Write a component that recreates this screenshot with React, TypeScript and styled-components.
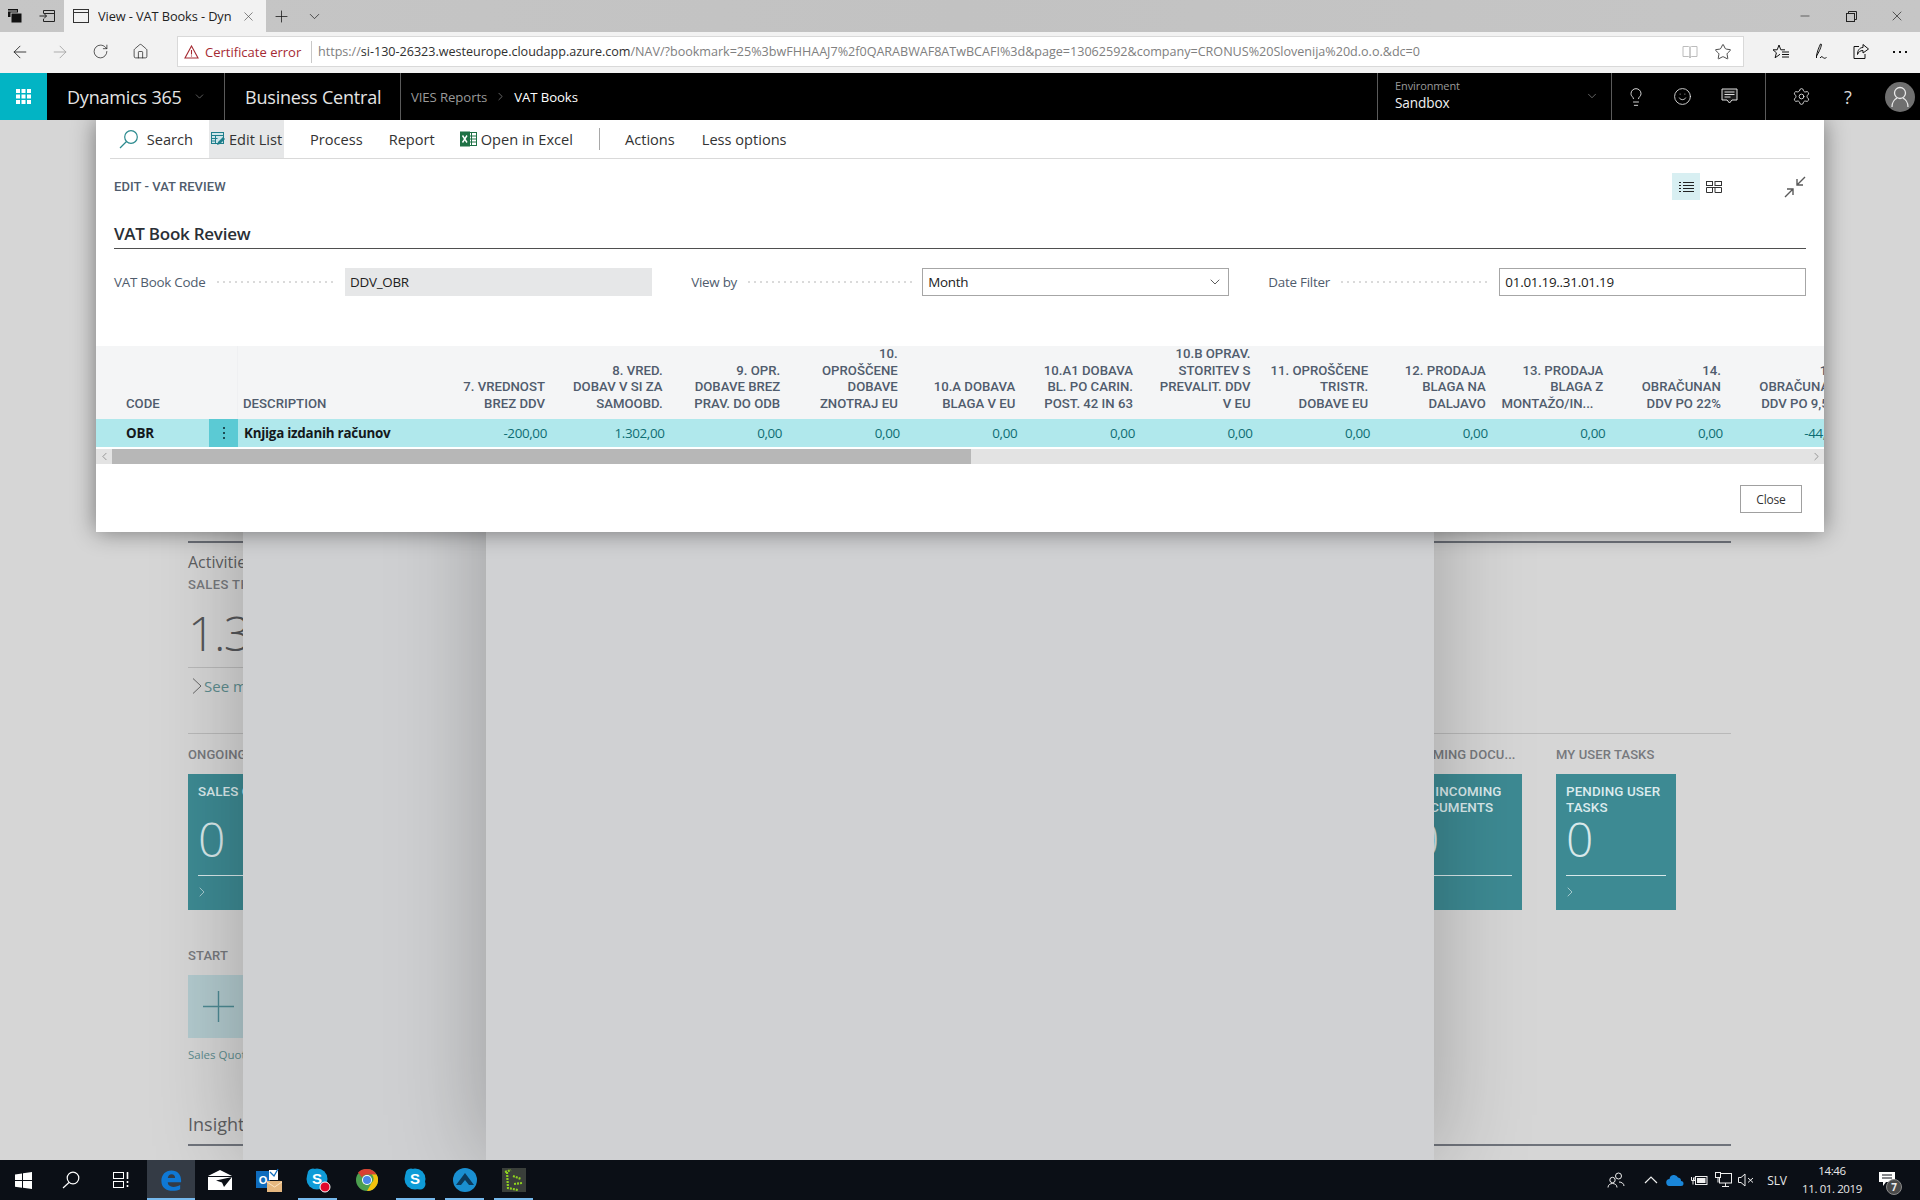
import React from "react";
import styled, { createGlobalStyle } from "styled-components";
import { ArrowLeft, ArrowRight, RotateCw, Home, Star, X, Plus, ChevronDown, ChevronRight, ChevronLeft, Minus, Lightbulb, Smile, Settings } from "lucide-react";

const UI = `"Open Sans", "Noto Sans", sans-serif`;
const DIN = `Roboto, "Liberation Sans", sans-serif`;

const Global = createGlobalStyle`
  html, body { margin: 0; padding: 0; width: 1920px; height: 1200px; overflow: hidden; background: #d5d5d5; }
  * { box-sizing: border-box; }
  #root { width: 1920px; height: 1200px; }
`;

const Screen = styled.div`
  width: 1920px; height: 1200px; display: flex; flex-direction: column;
  font-family: ${UI}; color: #222; overflow: hidden;
`;

/* ---------- browser chrome ---------- */
const TitleBar = styled.div`
  height: 32px; flex: none; display: flex; align-items: center;
  background: linear-gradient(to right, #c6c6c6, #c2c2c2 50%, #c6c6c6);
`;
const IconSlot = styled.div<{ $w: number; $color?: string; $ml?: number }>`
  width: ${p => p.$w}px; height: 100%; flex: none; display: flex; align-items: center; justify-content: center;
  margin-left: ${p => p.$ml || 0}px; color: ${p => p.$color || "#1a1a1a"};
`;
const Tab = styled.div`
  width: 202px; height: 32px; flex: none; background: #f2f2f2; display: flex; align-items: center;
  padding-left: 9px; font-size: 12.8px; letter-spacing: -0.1px; color: #222;
`;
const TabTitle = styled.span` margin-left: 9px; width: 143px; white-space: nowrap; overflow: hidden; `;
const Spring = styled.div` flex: 1; `;

const AddressBar = styled.div`
  height: 41px; flex: none; background: #f2f2f2; display: flex; align-items: center; padding-bottom: 2px;
`;
const UrlBox = styled.div`
  width: 1567px; height: 31px; margin-left: 17px; flex: none; background: #fff; border: 1px solid #d9d9d9;
  display: flex; align-items: center; font-size: 12.6px; white-space: nowrap; overflow: hidden;
`;
const CertError = styled.div`
  width: 134px; height: 22px; flex: none; display: flex; align-items: center; gap: 6px; padding-left: 6px;
  border-right: 1px solid #c8c8c8; color: #a52a32; font-size: 13px;
`;
const Url = styled.span` margin-left: 6px; width: 1360px; color: #808080; overflow: hidden; letter-spacing: -0.02px; `;
const UrlHost = styled.span` color: #303030; `;

/* ---------- app nav ---------- */
const NavBar = styled.div`
  height: 47px; flex: none; background: #000; display: flex; align-items: center; color: #fff; position: relative; z-index: 5;
`;
const Waffle = styled.div`
  width: 47px; height: 100%; flex: none; background: #02b4c4; display: flex; align-items: center; justify-content: center;
`;
const NavCell = styled.div<{ $w: number }>`
  width: ${p => p.$w}px; height: 100%; flex: none; display: flex; align-items: center; border-right: 1px solid #5a5a5a;
`;
const BrandText = styled.span<{ $pad: number }>`
  margin-left: ${p => p.$pad}px; font-size: 18px; font-weight: 400; color: #e4e4e4; white-space: nowrap; letter-spacing: -0.2px;
`;
const Crumb = styled.span<{ $current?: boolean }>`
  font-size: 13.2px; color: ${p => p.$current ? "#fff" : "#9a9a9a"}; white-space: nowrap; letter-spacing: -0.1px;
`;
const CrumbCell = styled.div`
  width: 977px; height: 100%; flex: none; display: flex; align-items: center; padding-left: 10px; gap: 7px; border-right: 1px solid #5a5a5a;
`;
const EnvCell = styled.div`
  width: 234px; height: 100%; flex: none; display: flex; align-items: center; justify-content: space-between;
  padding: 0 12px 2px 17px; border-right: 1px solid #5a5a5a;
`;
const EnvLabel = styled.div` font-size: 11px; color: #9a9a9a; line-height: 14px; letter-spacing: -0.1px; `;
const EnvValue = styled.div` font-size: 13.6px; color: #f2f2f2; line-height: 20px; letter-spacing: -0.1px; `;
const NavIcons = styled.div<{ $w: number; $pad: number }>`
  width: ${p => p.$w}px; height: 100%; flex: none; display: flex; align-items: center; padding-left: ${p => p.$pad}px;
  border-right: ${p => p.$w < 160 ? "1px solid #5a5a5a" : "none"}; color: #e6e6e6;
`;
const NavIcon = styled.div<{ $w: number }>`
  width: ${p => p.$w}px; flex: none; display: flex; justify-content: center;
`;
const QMark = styled.span` font-size: 18px; color: #d8d8d8; line-height: 20px; `;
const Avatar = styled.div`
  width: 30px; height: 30px; margin-left: 14px; border-radius: 50%; background: #6f6f6f; display: flex; align-items: center; justify-content: center; color: #e8e8e8;
`;

/* ---------- dimmed page behind ---------- */
const Stage = styled.div` flex: 1; position: relative; overflow: hidden; background: #d6d6d6; `;
const BaseContent = styled.div` padding: 421px 189px 0 188px; display: flex; flex-direction: column; `;
const Rule = styled.div<{ $top?: number }>` height: 2px; background: #6f737b; margin-top: ${p => p.$top || 0}px; flex: none; `;
const ThinRule = styled.div<{ $top: number; $w?: number }>`
  height: 1px; background: #b9b9b9; margin-top: ${p => p.$top}px; width: ${p => p.$w ? p.$w + "px" : "auto"}; flex: none;
`;
const SectionName = styled.div<{ $top: number; $size: number; $lh: number }>`
  margin-top: ${p => p.$top}px; font-size: ${p => p.$size}px; line-height: ${p => p.$lh}px; color: #5e5f62;
`;
const CueLabel = styled.div`
  margin-top: 5px; font-family: ${DIN}; font-size: 13px; line-height: 16px; font-weight: 500; color: #77797d; letter-spacing: .4px;
`;
const BigNumber = styled.div`
  margin-top: 12px; font-size: 48px; line-height: 56px; font-weight: 300; color: #55575a; letter-spacing: -1.5px;
`;
const SeeMore = styled.div`
  margin-top: 8px; padding-left: 4px; font-size: 15px; line-height: 20px; color: #5d8c8e; display: flex; align-items: center; gap: 2px;
`;
const GroupRow = styled.div` display: flex; gap: 34px; margin-top: 13px; `;
const Group = styled.div<{ $push?: boolean }>`
  width: 120px; flex: none; margin-left: ${p => p.$push ? "auto" : 0}; margin-right: ${p => p.$push === false ? "55px" : 0};
`;
const GroupHead = styled.div`
  font-family: ${DIN}; font-size: 13px; line-height: 16px; font-weight: 500; color: #77797d; white-space: nowrap; letter-spacing: .1px;
`;
const Tile = styled.div`
  height: 136px; margin-top: 11px; padding: 10px 10px 0; background: #3d8a93; color: #d8e8ea; display: flex; flex-direction: column;
`;
const TileTitle = styled.div`
  font-family: ${DIN}; font-size: 13.4px; font-weight: 500; line-height: 16px; min-height: 32px; color: #dcebed; letter-spacing: .1px;
`;
const TileCount = styled.div` font-size: 48px; font-weight: 300; line-height: 44px; margin-top: 1px; `;
const TileFoot = styled.div`
  margin-top: auto; height: 35px; border-top: 1px solid #d8e8ea; display: flex; align-items: center; padding-bottom: 2px;
  svg { margin-left: -4px; }
`;
const StartHead = styled(GroupHead)` margin-top: 38px; `;
const StartTile = styled.div`
  width: 120px; height: 63px; margin-top: 11px; background: #b2cace; color: #4d8a93; display: flex; align-items: center; padding-left: 15px;
`;
const StartLabel = styled.div` margin-top: 9px; font-size: 11.5px; line-height: 16px; color: #5d8c8e; `;

const Pane = styled.div<{ $left: number; $w: number; $bg: string }>`
  position: absolute; top: 0; bottom: 0; left: ${p => p.$left}px; width: ${p => p.$w}px;
  background: ${p => p.$bg}; box-shadow: 0 0 90px rgba(0,0,0,.26);
`;

/* ---------- dialog ---------- */
const Dialog = styled.div`
  position: absolute; left: 96px; top: 0; width: 1728px; height: 412px; background: #fff;
  box-shadow: 0 0 22px rgba(0,0,0,.45); display: flex; flex-direction: column; overflow: hidden;
`;
const Toolbar = styled.div`
  height: 39px; flex: none; margin: 0 14px 0 14px; border-bottom: 1px solid #d9d9d9; display: flex; align-items: stretch;
  font-size: 14.6px; color: #333; letter-spacing: 0;
`;
const ToolButton = styled.div<{ $active?: boolean; $ml?: number; $w?: number }>`
  display: flex; align-items: center; gap: 4px; white-space: nowrap; flex: none;
  margin-left: ${p => p.$ml || 0}px; width: ${p => p.$w ? p.$w + "px" : "auto"};
  background: ${p => p.$active ? "#e6e7e8" : "transparent"}; padding-left: ${p => p.$active ? "2px" : 0};
`;
const ToolDivider = styled.div` width: 1px; height: 22px; align-self: center; background: #a8a8a8; margin-left: 26px; margin-right: 25px; flex: none; `;
const CaptionRow = styled.div`
  height: 55px; flex: none; padding: 0 18px; display: flex; align-items: center;
`;
const Caption = styled.div`
  font-family: ${DIN}; font-size: 13px; font-weight: 500; color: #505c6d; white-space: nowrap; letter-spacing: .05px;
`;
const ViewToggle = styled.div<{ $on?: boolean }>`
  width: 28px; height: 27px; flex: none; display: flex; align-items: center; justify-content: center; background: ${p => p.$on ? "#d8eff2" : "transparent"};
`;
const CollapseWrap = styled.div` margin-left: 56px; display: flex; color: #5a5a5a; `;
const SectionTitle = styled.div`
  margin: 0 18px; height: 35px; flex: none; border-bottom: 1px solid #4f4f4f; font-size: 17px; font-weight: 600; color: #2a2f36; line-height: 39px; letter-spacing: -0.25px;
`;
const Fields = styled.div`
  margin: 19px 18px 0; display: grid; grid-template-columns: repeat(3, 1fr); column-gap: 39.5px; flex: none;
`;
const Field = styled.div` display: flex; align-items: center; height: 28px; `;
const FieldLabel = styled.div`
  width: 231px; flex: none; display: flex; align-items: center; gap: 9px; font-size: 13.4px; color: #505c6d; white-space: nowrap; letter-spacing: -0.25px; padding-right: 8px;
`;
const Dots = styled.span`
  flex: 1; height: 2px; background-image: radial-gradient(circle, #dadada 1px, transparent 1px); background-size: 6px 2px;
`;
const Input = styled.div<{ $ro?: boolean }>`
  flex: 1; height: 28px; display: flex; align-items: center; justify-content: space-between; padding: 0 5px;
  font-size: 13.4px; color: #212121; letter-spacing: -0.25px;
  background: ${p => p.$ro ? "#e6e7e8" : "#fff"}; border: ${p => p.$ro ? "none" : "1px solid #a6a6a6"};
`;
const TableClip = styled.div` margin-top: 50px; flex: none; overflow: hidden; `;
const GRID = "113px 29px 191.4px repeat(12, 117.6px)";
const HeadRow = styled.div`
  display: grid; grid-template-columns: ${GRID}; width: 1744px; height: 73px; background: #f4f5f6;
`;
const HeadCell = styled.div<{ $left?: number; $sep?: boolean }>`
  display: flex; align-items: flex-end; justify-content: ${p => p.$left !== undefined ? "flex-start" : "flex-end"};
  padding: 0 ${p => p.$left !== undefined ? 0 : 2}px 7px ${p => p.$left || 0}px;
  text-align: ${p => p.$left !== undefined ? "left" : "right"};
  font-family: ${DIN}; font-size: 13.2px; line-height: 16.6px; font-weight: 500; color: #505c6d; white-space: pre-line;
  border-right: ${p => p.$sep ? "1px solid #eff0f2" : "none"};
`;
const DataRow = styled.div`
  display: grid; grid-template-columns: ${GRID}; width: 1744px; height: 28px; background: #b0e8ec; align-items: center;
`;
const CodeCell = styled.div` padding-left: 30px; font-size: 13.4px; font-weight: 700; color: #15191c; letter-spacing: -0.2px; `;
const DotsCell = styled.div`
  height: 28px; background: #5bcad4; display: flex; flex-direction: column; align-items: center; justify-content: center; gap: 3px;
`;
const Dot = styled.i` width: 2px; height: 2px; background: #1d4e55; display: block; `;
const DescCell = styled.div` padding-left: 6px; font-size: 13.4px; font-weight: 700; color: #15191c; letter-spacing: -0.25px; white-space: nowrap; `;
const NumCell = styled.div` text-align: right; font-size: 13.4px; color: #0e6d73; letter-spacing: -0.35px; white-space: nowrap; `;
const ScrollBar = styled.div`
  margin-top: 2px; height: 15px; flex: none; background: #e3e3e3; display: flex; align-items: center; color: #555;
`;
const ScrollArrow = styled.div` width: 16px; flex: none; display: flex; justify-content: center; `;
const ScrollThumb = styled.div` width: 859px; height: 15px; background: #b7b7b7; flex: none; `;
const Footer = styled.div` flex: 1; display: flex; justify-content: flex-end; padding: 21px 22px 0 0; `;
const CloseButton = styled.div`
  width: 62px; height: 28px; border: 1px solid #a0a0a0; background: #fff; display: flex; align-items: center; justify-content: center;
  font-size: 12px; color: #333; letter-spacing: -0.2px;
`;

/* ---------- taskbar ---------- */
const TaskBar = styled.div`
  height: 40px; flex: none; background: #0b0f16; display: flex; align-items: center; position: relative; z-index: 5; color: #fff;
`;
const TaskItem = styled.div<{ $w?: number; $active?: boolean; $open?: boolean }>`
  width: ${p => p.$w || 49}px; height: 40px; flex: none; display: flex; align-items: center; justify-content: center; position: relative;
  background: ${p => p.$active ? "#343b45" : "transparent"};
  &::after {
    content: ""; display: ${p => p.$open ? "block" : "none"}; position: absolute; bottom: 0;
    left: ${p => p.$active ? 0 : 5}px; right: ${p => p.$active ? 0 : 5}px; height: 2px; background: #76b9ed;
  }
`;
const Tray = styled.div<{ $w: number; $mr?: number }>`
  width: ${p => p.$w}px; height: 40px; flex: none; display: flex; align-items: center; justify-content: center; color: #eee;
  margin-right: ${p => p.$mr || 0}px;
`;
const TrayText = styled.span` font-size: 12px; color: #e8e8e8; letter-spacing: -0.2px; `;
const Clock = styled.div`
  width: 70px; flex: none; margin-right: 8px; text-align: center; font-size: 11.5px; line-height: 18px; color: #e8e8e8; letter-spacing: -0.4px; white-space: nowrap;
`;
const Notify = styled.div`
  width: 45px; height: 40px; position: relative; flex: none; display: flex; align-items: center; padding: 0 0 2px 4px;
`;
const Badge = styled.div`
  position: absolute; left: 11px; top: 19px; width: 16px; height: 16px; border-radius: 50%; background: #4a4a4a; border: 1px solid #8a8a8a;
  font-size: 10px; font-weight: 700; line-height: 14px; text-align: center; color: #eee;
`;

/* ---------- drawn icons ---------- */
const ManageTabs = () => (
  <svg width="16" height="16" viewBox="0 0 16 16"><rect x="1" y="1" width="10" height="8" fill="#111" /><rect x="4" y="5" width="11" height="10" fill="#111" stroke="#c4c4c4" strokeWidth="1" /><rect x="1" y="2.5" width="9" height="1" fill="#c4c4c4" /></svg>
);
const AsideTabs = () => (
  <svg width="16" height="14" viewBox="0 0 16 14" fill="none" stroke="#222"><path d="M4.5 4V1.5h11v11h-11V10" /><path d="M4.5 4.5h11" /><path d="M.5 7h7M5 4.5 7.5 7 5 9.5" /></svg>
);
const PageIcon = () => (
  <svg width="16" height="16" viewBox="0 0 16 16" fill="none" stroke="#333"><rect x=".5" y="1.5" width="15" height="13" /><path d="M.5 4.5h15" /></svg>
);
const Restore = () => (
  <svg width="11" height="11" viewBox="0 0 11 11" fill="none" stroke="#222"><rect x=".5" y="2.5" width="8" height="8" /><path d="M2.5 2.5v-2h8v8h-2" /></svg>
);
const Warn = () => (
  <svg width="15" height="14" viewBox="0 0 15 14" fill="none" stroke="#a52a32" strokeWidth="1.1"><path d="M7.5 1 14 13H1z" /><path d="M7.5 5v4.5M7.5 10.6v1" /></svg>
);
const Reader = () => (
  <svg width="16" height="16" viewBox="0 0 16 16" fill="none" stroke="#bcbcbc"><path d="M1 2.5h5.5c1 0 1.5.5 1.5 1.5v10c0-1-.5-1.5-1.5-1.5H1zM15 2.5H9.500C8.500 2.500 8 3 8 4v10c0-1 .5-1.500 1.500-1.500H15z" /></svg>
);
const HubIcon = () => (
  <svg width="18" height="18" viewBox="0 0 18 18" fill="none" stroke="#111"><path d="M7 2 8.800 6.800H13M7 2 5.200 6.800H1l3.400 3-1.300 5L7 12l1-.8" /><path d="M10 9h7M10 11.500h7M10 14h7" /></svg>
);
const PenIcon = () => (
  <svg width="18" height="18" viewBox="0 0 18 18" fill="none" stroke="#111"><path d="M8.500 1C7 4 5 9 4.500 13c2-3 4.500-8 5-11.500C9.400 1 9 .9 8.500 1zM4.500 13v2" /><path d="M8 15c1.500-2 2.500-1.500 3-.5s2 1 3.500 0" /></svg>
);
const ShareIcon = () => (
  <svg width="18" height="18" viewBox="0 0 18 18" fill="none" stroke="#111"><path d="M7 3.500H2v12h11V11" /><path d="M11 1.500 16.500 6 11 10V7.500C8 7.500 6.500 9 5.500 11.500 5.500 7.500 7.500 4.500 11 4.500z" /></svg>
);
const Ellipsis = () => (
  <svg width="14" height="4" viewBox="0 0 14 4" fill="#111"><rect x="0" y="1" width="2" height="2" /><rect x="6" y="1" width="2" height="2" /><rect x="12" y="1" width="2" height="2" /></svg>
);
const WaffleIcon = () => (
  <svg width="15" height="15" viewBox="0 0 15 15" fill="#fff">
    {[0, 5.5, 11].flatMap(x => [0, 5.5, 11].map(y => <rect key={`${x}-${y}`} x={x} y={y} width="4" height="4" />))}
  </svg>
);
const CommentIcon = () => (
  <svg width="17" height="17" viewBox="0 0 17 17"><path d="M1 1h15v11h-5l-2.500 3L6 12H1z" fill="#1a1a1a" stroke="#e0e0e0" /><path d="M3.500 4h10M3.500 6.500h10M3.500 9h6" stroke="#e0e0e0" /></svg>
);
const UserIcon = () => (
  <svg width="20" height="22" viewBox="0 0 20 22" fill="none" stroke="currentColor" strokeWidth="1.300"><circle cx="10" cy="7" r="5.500" /><path d="M2 21c0-5 3-8 5-8.800M18 21c0-5-3-8-5-8.800" /></svg>
);
const ExcelIcon = () => (
  <svg width="17" height="16" viewBox="0 0 17 16"><rect x="7" y="1.500" width="9.500" height="13" fill="#fff" stroke="#1e7145" /><path d="M7 5h9.500M7 8h9.500M7 11h9.500M11.500 1.500v13" stroke="#1e7145" /><rect x="0" y="0.500" width="10" height="15" fill="#1e7145" /><path d="M2.500 4.500 7 11.500M7 4.500 2.500 11.500" stroke="#fff" strokeWidth="1.400" /></svg>
);
const EditListIcon = () => (
  <svg width="14" height="14" viewBox="0 0 14 14"><rect x="0.500" y="0.500" width="12" height="11" fill="#cfe6ea" stroke="#1f7f8c" /><path d="M0.500 3.500h12M0.500 6.500h6M0.500 9h4M4.500 3.500v8" stroke="#1f7f8c" /><path d="M6 13l1-3 5-5 2 2-5 5z" fill="#1f7f8c" /></svg>
);
const SearchGlass = () => (
  <svg width="20" height="20" viewBox="0 0 20 20" fill="none" stroke="#2b8a8e" strokeWidth="1.200"><circle cx="12" cy="8" r="6.300" /><path d="M7.500 12.500 1 19" /></svg>
);
const ListIcon = () => (
  <svg width="15" height="12" viewBox="0 0 15 12" stroke="#222"><path d="M0 1.500h2M4 1.500h11M0 4.500h2M4 4.500h11M0 7.500h2M4 7.500h11M0 10.500h2M4 10.500h11" /></svg>
);
const CardsIcon = () => (
  <svg width="16" height="12" viewBox="0 0 16 12" fill="none" stroke="#333"><rect x=".5" y=".5" width="6" height="4" /><rect x="9" y=".5" width="6.500" height="4" /><path d="M.5 6.500h15M.5 6.500v5h6v-5M9 6.500v5h6.500v-5" /></svg>
);
const CollapseIcon = () => (
  <svg width="22" height="22" viewBox="0 0 22 22" fill="none" stroke="currentColor" strokeWidth="1.400"><path d="M21 1 13 9M13 3v6h6M1 21l8-8M3 13h6v6" /></svg>
);
const SeeChevron = () => (
  <svg width="10" height="16" viewBox="0 0 10 16" fill="none" stroke="#666"><path d="m1 .5 8 7.500-8 7.500" /></svg>
);
const PlusGlyph = () => (
  <svg width="31" height="31" viewBox="0 0 31 31" stroke="currentColor" strokeWidth="1.400"><path d="M0 15.500h31M15.500 0v31" /></svg>
);
const WinLogo = () => (
  <svg width="17" height="17" viewBox="0 0 17 17" fill="#fff"><path d="M0 2.400 7 1.400v6.700H0zM8 1.300 17 0v8.100H8zM0 9h7v6.700l-7-1zM8 9h9v8l-9-1.300z" /></svg>
);
const Magnifier = () => (
  <svg width="18" height="18" viewBox="0 0 18 18" fill="none" stroke="#fff" strokeWidth="1.200"><circle cx="11" cy="7" r="5.800" /><path d="M7 11.500 1 17" /></svg>
);
const TaskView = () => (
  <svg width="17" height="16" viewBox="0 0 17 16" fill="none" stroke="#fff"><rect x=".5" y=".5" width="10" height="6" /><rect x=".5" y="9.500" width="10" height="6" /><path d="M14.500 0v7M14.500 9v2M14.500 13v2" strokeWidth="1.600" /></svg>
);
const EdgeLogo = () => (
  <svg width="22" height="22" viewBox="0 0 24 24"><path fillRule="evenodd" fill="#0f78d4" d="M1.500 13C1.500 6 6 1.500 12.500 1.500 19 1.500 23 6 23 12v2.500H8.500c0 3 2.500 5 6 5 3 0 5.500-.7 7.500-2V22c-2 1.200-5 1.800-8 1.800C6.500 23.800 1.500 20 1.500 13zM8.500 9.800h8c0-2.400-1.500-4-3.800-4-2.400 0-3.900 1.600-4.200 4z" /></svg>
);
const MailLogo = () => (
  <svg width="24" height="20" viewBox="0 0 24 20"><path d="M0 6 12 0l12 6z" fill="#fff" /><rect x="0" y="7" width="24" height="13" fill="#fff" /><path d="M24 7 8 10.500l6 2 2 4.500z" fill="#0b0f16" /></svg>
);
const OutlookLogo = () => (
  <svg width="26" height="26" viewBox="0 0 26 26">
    <rect x="0" y="4" width="14" height="17" fill="#0f6cbd" />
    <text x="7" y="17" textAnchor="middle" fontSize="11" fontWeight="700" fill="#fff" fontFamily="Liberation Sans">O</text>
    <rect x="13" y="3" width="9" height="10" fill="#fff" /><path d="m14 5 4 4 4-7" fill="none" stroke="#0f6cbd" strokeWidth="1.300" />
    <rect x="11" y="14" width="15" height="11" fill="#e5b77f" /><path d="m11 15 7.500 5 7.500-5" fill="none" stroke="#fbe5c4" />
  </svg>
);
const SkypeLogo = ({ dot }: { dot?: boolean }) => (
  <svg width="26" height="26" viewBox="0 0 26 26">
    <circle cx="12" cy="12" r="10.500" fill="#0f9bd7" /><circle cx="8" cy="7" r="5.500" fill="#0f9bd7" /><circle cx="17" cy="17" r="5.500" fill="#0f9bd7" />
    <text x="12" y="17" textAnchor="middle" fontSize="15" fontWeight="700" fill="#fff" fontFamily="Liberation Sans">S</text>
    {dot && <circle cx="20" cy="20" r="5" fill="#e3092c" stroke="#fff" strokeWidth="1" />}
  </svg>
);
const ChromeLogo = () => (
  <svg width="22" height="22" viewBox="0 0 22 22">
    <circle cx="11" cy="11" r="11" fill="#4c9f4f" />
    <path d="M11 0a11 11 0 0 1 9.530 5.500H11a5.500 5.500 0 0 0-5 3L2 3.500A11 11 0 0 1 11 0z" fill="#d93f33" />
    <path d="M20.530 5.500A11 11 0 0 1 11 22l4.700-8.200a5.500 5.500 0 0 0 0-8.300z" fill="#f4c20d" />
    <circle cx="11" cy="11" r="5" fill="#fff" /><circle cx="11" cy="11" r="4" fill="#4a87e8" />
  </svg>
);
const ArrowApp = () => (
  <svg width="24" height="24" viewBox="0 0 24 24"><circle cx="12" cy="12" r="12" fill="#1a8fd1" /><path d="M12 5 21 17h-5l-4-5-4 5H3z" fill="#0c3a5c" /></svg>
);
const GreenApp = () => (
  <svg width="24" height="24" viewBox="0 0 24 24"><rect width="24" height="24" fill="#3a3f3a" /><path d="M3 4 9 2M5 4l1 16 10 2M11 8l8 3M20 15l-8 1" fill="none" stroke="#8ed11f" strokeWidth="2.200" strokeDasharray="2 1" /></svg>
);
const People = () => (
  <svg width="18" height="16" viewBox="0 0 18 16" fill="none" stroke="#eee"><circle cx="11.500" cy="4" r="3" /><circle cx="5.500" cy="8" r="2.700" /><path d="M1 15.500c0-2.500 2-4 4.500-4s4.500 1.500 4.500 4M12 10c2.500 0 5 1.500 5 4" /></svg>
);
const Caret = () => (
  <svg width="14" height="8" viewBox="0 0 14 8" fill="none" stroke="#eee" strokeWidth="1.200"><path d="m1 7 6-6 6 6" /></svg>
);
const Cloud = () => (
  <svg width="18" height="12" viewBox="0 0 18 12" fill="#1a86d9"><path d="M4 12a3.500 3.500 0 0 1-.5-7 4.500 4.500 0 0 1 8.500-1.500A3.500 3.500 0 0 1 15 7a2.500 2.500 0 0 1 0 5z" /></svg>
);
const Battery = () => (
  <svg width="17" height="12" viewBox="0 0 17 12" fill="none" stroke="#eee"><rect x="4.500" y="2.500" width="11.500" height="8" /><rect x="6" y="4" width="8.500" height="5" fill="#eee" stroke="none" /><path d="M2.500 3.500v3M.5 3v3.500h3.500V3M2 6.500v4" /></svg>
);
const Network = () => (
  <svg width="17" height="16" viewBox="0 0 17 16" fill="none" stroke="#eee"><rect x="4.500" y="1.500" width="12" height="9.500" /><rect x=".5" y=".5" width="5" height="5" fill="#0b0f16" /><path d="M10.500 11v3M7 14.500h7M3 5.500v5" /></svg>
);
const Speaker = () => (
  <svg width="16" height="14" viewBox="0 0 16 14" fill="none" stroke="#eee"><path d="M.5 4.500H3L7 1v12L3 9.500H.5z" /><path d="m10 5 5 4.500M15 5l-5 4.500" /></svg>
);
const Bubble = () => (
  <svg width="16" height="14" viewBox="0 0 16 14"><path d="M0 0h16v10H7l-3 4v-4H0z" fill="#fff" /><path d="M3 3h10M3 6h10" stroke="#0b0f16" /></svg>
);

const COLS: { h: string; v: string }[] = [
  { h: "7. VREDNOST\nBREZ DDV", v: "-200,00" },
  { h: "8. VRED.\nDOBAV V SI ZA\nSAMOOBD.", v: "1.302,00" },
  { h: "9. OPR.\nDOBAVE BREZ\nPRAV. DO ODB", v: "0,00" },
  { h: "10.\nOPROŠČENE\nDOBAVE\nZNOTRAJ EU", v: "0,00" },
  { h: "10.A DOBAVA\nBLAGA V EU", v: "0,00" },
  { h: "10.A1 DOBAVA\nBL. PO CARIN.\nPOST. 42 IN 63", v: "0,00" },
  { h: "10.B OPRAV.\nSTORITEV S\nPREVALIT. DDV\nV EU", v: "0,00" },
  { h: "11. OPROŠČENE\nTRISTR.\nDOBAVE EU", v: "0,00" },
  { h: "12. PRODAJA\nBLAGA NA\nDALJAVO", v: "0,00" },
  { h: "13. PRODAJA\nBLAGA Z\nMONTAŽO/IN...\u00a0\u00a0\u00a0", v: "0,00" },
  { h: "14.\nOBRAČUNAN\nDDV PO 22%", v: "0,00" },
  { h: "15.\nOBRAČUNAN\nDDV PO 9,5%", v: "-44,00" },
];

export default function App() {
  return (
    <Screen>
      <Global />
      <TitleBar>
        <IconSlot $w={30}><ManageTabs /></IconSlot>
        <IconSlot $w={34}><AsideTabs /></IconSlot>
        <Tab>
          <PageIcon />
          <TabTitle>View - VAT Books - Dyn</TabTitle>
          <X size={15} strokeWidth={1} color="#444" />
        </Tab>
        <IconSlot $w={31}><Plus size={19} strokeWidth={1} /></IconSlot>
        <IconSlot $w={35}><ChevronDown size={17} strokeWidth={1} /></IconSlot>
        <Spring />
        <IconSlot $w={46}><Minus size={14} strokeWidth={1} /></IconSlot>
        <IconSlot $w={46}><Restore /></IconSlot>
        <IconSlot $w={46}><X size={16} strokeWidth={1} /></IconSlot>
      </TitleBar>

      <AddressBar>
        <IconSlot $w={40}><ArrowLeft size={20} strokeWidth={1} /></IconSlot>
        <IconSlot $w={40} $color="#a0a0a0"><ArrowRight size={20} strokeWidth={1} /></IconSlot>
        <IconSlot $w={40}><RotateCw size={17} strokeWidth={1} /></IconSlot>
        <IconSlot $w={40}><Home size={17} strokeWidth={1} /></IconSlot>
        <UrlBox>
          <CertError><Warn /> Certificate error</CertError>
          <Url>https://<UrlHost>si-130-26323.westeurope.cloudapp.azure.com</UrlHost>/NAV/?bookmark=25%3bwFHHAAJ7%2f0QARABWAF8ATwBCAFI%3d&amp;page=13062592&amp;company=CRONUS%20Slovenija%20d.o.o.&amp;dc=0</Url>
          <IconSlot $w={24}><Reader /></IconSlot>
          <IconSlot $w={41}><Star size={18} strokeWidth={1} color="#111" /></IconSlot>
        </UrlBox>
        <IconSlot $w={40} $ml={17}><HubIcon /></IconSlot>
        <IconSlot $w={40}><PenIcon /></IconSlot>
        <IconSlot $w={39}><ShareIcon /></IconSlot>
        <IconSlot $w={40}><Ellipsis /></IconSlot>
      </AddressBar>

      <NavBar>
        <Waffle><WaffleIcon /></Waffle>
        <NavCell $w={178}>
          <BrandText $pad={20}>Dynamics 365</BrandText>
          <IconSlot $w={36} $color="#aaa"><ChevronDown size={13} strokeWidth={1} /></IconSlot>
        </NavCell>
        <NavCell $w={176}><BrandText $pad={20}>Business Central</BrandText></NavCell>
        <CrumbCell>
          <Crumb>VIES Reports</Crumb>
          <ChevronRight size={13} strokeWidth={1} color="#bbb" />
          <Crumb $current>VAT Books</Crumb>
        </CrumbCell>
        <EnvCell>
          <div>
            <EnvLabel>Environment</EnvLabel>
            <EnvValue>Sandbox</EnvValue>
          </div>
          <ChevronDown size={14} strokeWidth={1} color="#aaa" />
        </EnvCell>
        <NavIcons $w={154} $pad={0}>
          <NavIcon $w={47}><Lightbulb size={20} strokeWidth={1.1} /></NavIcon>
          <NavIcon $w={47}><Smile size={19} strokeWidth={1.1} /></NavIcon>
          <NavIcon $w={47}><CommentIcon /></NavIcon>
        </NavIcons>
        <NavIcons $w={160} $pad={12}>
          <NavIcon $w={47}><Settings size={19} strokeWidth={1.1} /></NavIcon>
          <NavIcon $w={46}><QMark>?</QMark></NavIcon>
          <Avatar><UserIcon /></Avatar>
        </NavIcons>
      </NavBar>

      <Stage>
        <BaseContent>
          <Rule />
          <SectionName $top={9} $size={16} $lh={20}>Activities</SectionName>
          <CueLabel>SALES THIS MONTH</CueLabel>
          <BigNumber>1.302</BigNumber>
          <ThinRule $top={6} $w={300} />
          <SeeMore><SeeChevron />See more</SeeMore>
          <ThinRule $top={37} />
          <GroupRow>
            <Group>
              <GroupHead>ONGOING SALES</GroupHead>
              <Tile>
                <TileTitle>SALES QUOTES</TileTitle>
                <TileCount>0</TileCount>
                <TileFoot><ChevronRight size={16} strokeWidth={1} /></TileFoot>
              </Tile>
            </Group>
            <Group $push>
              <GroupHead>INCOMING DOCU...</GroupHead>
              <Tile>
                <TileTitle>MY INCOMING DOCUMENTS</TileTitle>
                <TileCount>0</TileCount>
                <TileFoot><ChevronRight size={16} strokeWidth={1} /></TileFoot>
              </Tile>
            </Group>
            <Group $push={false}>
              <GroupHead>MY USER TASKS</GroupHead>
              <Tile>
                <TileTitle>PENDING USER TASKS</TileTitle>
                <TileCount>0</TileCount>
                <TileFoot><ChevronRight size={16} strokeWidth={1} /></TileFoot>
              </Tile>
            </Group>
          </GroupRow>
          <StartHead>START</StartHead>
          <StartTile><PlusGlyph /></StartTile>
          <StartLabel>Sales Quote</StartLabel>
          <SectionName $top={49} $size={18} $lh={24}>Insights</SectionName>
          <Rule $top={8} />
        </BaseContent>

        <Pane $left={243} $w={243} $bg="#cfd0d2" />
        <Pane $left={486} $w={948} $bg="#d0d1d3" />

        <Dialog>
          <Toolbar>
            <ToolButton $ml={9}><SearchGlass /><span>&nbsp;Search</span></ToolButton>
            <ToolButton $active $ml={16} $w={75}><EditListIcon />Edit List</ToolButton>
            <ToolButton $ml={26}>Process</ToolButton>
            <ToolButton $ml={26}>Report</ToolButton>
            <ToolButton $ml={25}><ExcelIcon />Open in Excel</ToolButton>
            <ToolDivider />
            <ToolButton>Actions</ToolButton>
            <ToolButton $ml={27}>Less options</ToolButton>
          </Toolbar>
          <CaptionRow>
            <Caption>EDIT - VAT REVIEW</Caption>
            <Spring />
            <ViewToggle $on><ListIcon /></ViewToggle>
            <ViewToggle><CardsIcon /></ViewToggle>
            <CollapseWrap><CollapseIcon /></CollapseWrap>
          </CaptionRow>
          <SectionTitle>VAT Book Review</SectionTitle>
          <Fields>
            <Field>
              <FieldLabel>VAT Book Code<Dots /></FieldLabel>
              <Input $ro>DDV_OBR</Input>
            </Field>
            <Field>
              <FieldLabel>View by<Dots /></FieldLabel>
              <Input>Month<ChevronDown size={16} strokeWidth={1.2} color="#333" /></Input>
            </Field>
            <Field>
              <FieldLabel>Date Filter<Dots /></FieldLabel>
              <Input>01.01.19..31.01.19</Input>
            </Field>
          </Fields>
          <TableClip>
            <HeadRow>
              <HeadCell $left={30}>CODE</HeadCell>
              <HeadCell $left={0} $sep />
              <HeadCell $left={5}>DESCRIPTION</HeadCell>
              {COLS.map(c => <HeadCell key={c.h}>{c.h}</HeadCell>)}
            </HeadRow>
            <DataRow>
              <CodeCell>OBR</CodeCell>
              <DotsCell><Dot /><Dot /><Dot /></DotsCell>
              <DescCell>Knjiga izdanih računov</DescCell>
              {COLS.map(c => <NumCell key={c.h}>{c.v}</NumCell>)}
            </DataRow>
          </TableClip>
          <ScrollBar>
            <ScrollArrow><ChevronLeft size={13} strokeWidth={1} /></ScrollArrow>
            <ScrollThumb />
            <Spring />
            <ScrollArrow><ChevronRight size={13} strokeWidth={1} /></ScrollArrow>
          </ScrollBar>
          <Footer><CloseButton>Close</CloseButton></Footer>
        </Dialog>
      </Stage>

      <TaskBar>
        <TaskItem $w={47}><WinLogo /></TaskItem>
        <TaskItem $w={48}><Magnifier /></TaskItem>
        <TaskItem $w={52}><TaskView /></TaskItem>
        <TaskItem $w={48} $active $open><EdgeLogo /></TaskItem>
        <TaskItem><MailLogo /></TaskItem>
        <TaskItem><OutlookLogo /></TaskItem>
        <TaskItem $open><SkypeLogo dot /></TaskItem>
        <TaskItem><ChromeLogo /></TaskItem>
        <TaskItem $open><SkypeLogo /></TaskItem>
        <TaskItem $open><ArrowApp /></TaskItem>
        <TaskItem $open><GreenApp /></TaskItem>
        <Spring />
        <Tray $w={32} $mr={7}><People /></Tray>
        <Tray $w={24}><Caret /></Tray>
        <Tray $w={24}><Cloud /></Tray>
        <Tray $w={24}><Battery /></Tray>
        <Tray $w={24}><Network /></Tray>
        <Tray $w={22}><Speaker /></Tray>
        <Tray $w={40}><TrayText>SLV</TrayText></Tray>
        <Clock>14:46<br />11. 01. 2019</Clock>
        <Notify><Bubble /><Badge>7</Badge></Notify>
      </TaskBar>
    </Screen>
  );
}
